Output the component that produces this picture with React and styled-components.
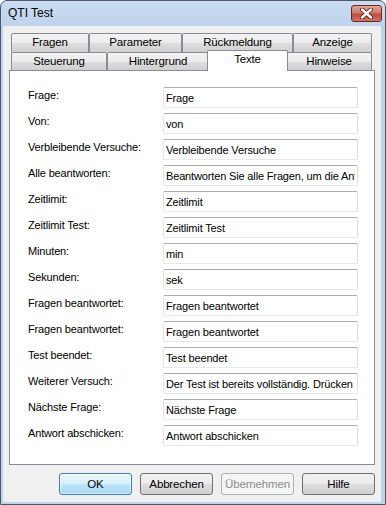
import React from 'react';
import styled, { createGlobalStyle, css } from 'styled-components';

const GlobalStyle = createGlobalStyle`
  body {
    margin: 0;
    background: #ffffff;
    font-family: "Liberation Sans", Arial, sans-serif;
  }
`;

const Window = styled.div`
  width: 386px;
  height: 505px;
  box-sizing: border-box;
  border: 1px solid #4a5868;
  border-radius: 7px 7px 0 0;
  background: linear-gradient(#cadcf1, #bdd3ec 26px, #bed4ec);
  display: flex;
  flex-direction: column;
  overflow: hidden;
`;

const TitleBar = styled.div`
  height: 25px;
  box-sizing: border-box;
  padding: 4px 3px 0 7px;
  display: flex;
  justify-content: space-between;
  align-items: flex-start;
`;

const Title = styled.div`
  font-size: 12px;
  line-height: 17px;
  color: #000;
`;

const CloseButton = styled.div`
  width: 31px;
  height: 17px;
  box-sizing: border-box;
  border: 1px solid #6b2a22;
  border-radius: 3px;
  background: linear-gradient(#e3a59a, #cf7a6c 45%, #c24d40 55%, #d07363);
  display: flex;
  align-items: center;
  justify-content: center;
`;

const Client = styled.div`
  flex: 1;
  margin: 0 4px 2px 2px;
  background: #f0f0f0;
  padding: 7px 6px 7px 6px;
  display: flex;
  flex-direction: column;
`;

const Tabs = styled.div`
  padding: 0 3px 0 2px;
  display: flex;
  flex-direction: column;
`;

const TabRow = styled.div`
  display: flex;
  align-items: flex-end;
`;

const Tab = styled.div`
  width: ${(p) => p.$w}px;
  height: ${(p) => p.$h}px;
  box-sizing: border-box;
  border: 1px solid #898c95;
  border-bottom: none;
  border-radius: 2px 2px 0 0;
  background: linear-gradient(#f3f3f3, #ebebeb 50%, #dedede 50%, #d0d0d0);
  font-size: 11.5px;
  letter-spacing: -0.15px;
  line-height: ${(p) => p.$h - 2}px;
  text-align: center;
  color: #000;
  white-space: nowrap;
  ${(p) =>
    p.$active &&
    css`
      position: relative;
      z-index: 2;
      height: 21px;
      margin: -2px -2px -1px;
      width: ${p.$w + 4}px;
      background: #ffffff;
      line-height: 16px;
    `}
`;

const Panel = styled.div`
  height: 395px;
  box-sizing: border-box;
  border: 1px solid #898c95;
  background: #ffffff;
  padding: 16px 16px 0 18px;
  display: grid;
  grid-template-columns: 1fr 195px;
  row-gap: 5px;
  align-content: start;
`;

const Label = styled.div`
  font-size: 11px;
  letter-spacing: -0.15px;
  line-height: 16px;
  color: #000;
  white-space: nowrap;
`;

const Field = styled.input`
  width: 195px;
  height: 21px;
  box-sizing: border-box;
  border: 1px solid;
  border-color: #abadb3 #dbdfe6 #e3e9ef #e2e3ea;
  border-radius: 2px;
  padding: 0 2px;
  font-family: "Liberation Sans", Arial, sans-serif;
  font-size: 11px;
  letter-spacing: -0.15px;
  color: #000;
  background: #fff;
  outline: none;
`;

const ButtonRow = styled.div`
  margin-top: 8px;
  display: flex;
  justify-content: flex-end;
  gap: 8px;
`;

const Button = styled.div`
  width: 73px;
  height: 22px;
  box-sizing: border-box;
  border: 1px solid #707070;
  border-radius: 3px;
  background: linear-gradient(#f2f2f2, #ebebeb 50%, #dddddd 50%, #cfcfcf);
  font-size: 11.5px;
  letter-spacing: -0.15px;
  line-height: 20px;
  text-align: center;
  color: #000;
  ${(p) =>
    p.$default &&
    css`
      border-color: #3c7fb1;
      background: linear-gradient(#eaf6fd, #d9f0fc 50%, #bee6fd 50%, #a7d9f5);
      box-shadow: inset 0 0 0 1px rgba(255, 255, 255, 0.5);
    `}
  ${(p) =>
    p.$disabled &&
    css`
      border-color: #adb2b5;
      background: #f4f4f4;
      color: #8d8d8d;
    `}
`;

const rowOne = [
  { t: 'Fragen', w: 78 },
  { t: 'Parameter', w: 93 },
  { t: 'Rückmeldung', w: 111 },
  { t: 'Anzeige', w: 79 },
];

const rowTwo = [
  { t: 'Steuerung', w: 96 },
  { t: 'Hintergrund', w: 102 },
  { t: 'Texte', w: 77, active: true },
  { t: 'Hinweise', w: 86 },
];

const fields = [
  ['Frage:', 'Frage'],
  ['Von:', 'von'],
  ['Verbleibende Versuche:', 'Verbleibende Versuche'],
  ['Alle beantworten:', 'Beantworten Sie alle Fragen, um die Antwort abzuschicken.'],
  ['Zeitlimit:', 'Zeitlimit'],
  ['Zeitlimit Test:', 'Zeitlimit Test'],
  ['Minuten:', 'min'],
  ['Sekunden:', 'sek'],
  ['Fragen beantwortet:', 'Fragen beantwortet'],
  ['Fragen beantwortet:', 'Fragen beantwortet'],
  ['Test beendet:', 'Test beendet'],
  ['Weiterer Versuch:', 'Der Test ist bereits vollständig. Drücken Sie erneut'],
  ['Nächste Frage:', 'Nächste Frage'],
  ['Antwort abschicken:', 'Antwort abschicken'],
];

const App = () => {
  return (
    <Window>
      <GlobalStyle />
      <TitleBar>
        <Title>QTI Test</Title>
        <CloseButton>
          <svg width="13" height="11" viewBox="0 0 13 11">
            <path d="M2 1.5 L11 9.5 M11 1.5 L2 9.5" stroke="#5b2019" strokeWidth="4.2" strokeLinecap="round" />
            <path d="M2 1.5 L11 9.5 M11 1.5 L2 9.5" stroke="#ffffff" strokeWidth="2.4" strokeLinecap="round" />
          </svg>
        </CloseButton>
      </TitleBar>
      <Client>
        <Tabs>
          <TabRow>
            {rowOne.map((tab) => (
              <Tab key={tab.t} $w={tab.w} $h={19}>{tab.t}</Tab>
            ))}
          </TabRow>
          <TabRow>
            {rowTwo.map((tab) => (
              <Tab key={tab.t} $w={tab.w} $h={18} $active={tab.active}>{tab.t}</Tab>
            ))}
          </TabRow>
        </Tabs>
        <Panel>
          {fields.map(([label, value], i) => (
            <React.Fragment key={i}>
              <Label>{label}</Label>
              <Field readOnly defaultValue={value} />
            </React.Fragment>
          ))}
        </Panel>
        <ButtonRow>
          <Button $default>OK</Button>
          <Button>Abbrechen</Button>
          <Button $disabled>Übernehmen</Button>
          <Button>Hilfe</Button>
        </ButtonRow>
      </Client>
    </Window>
  );
};

export default App;
